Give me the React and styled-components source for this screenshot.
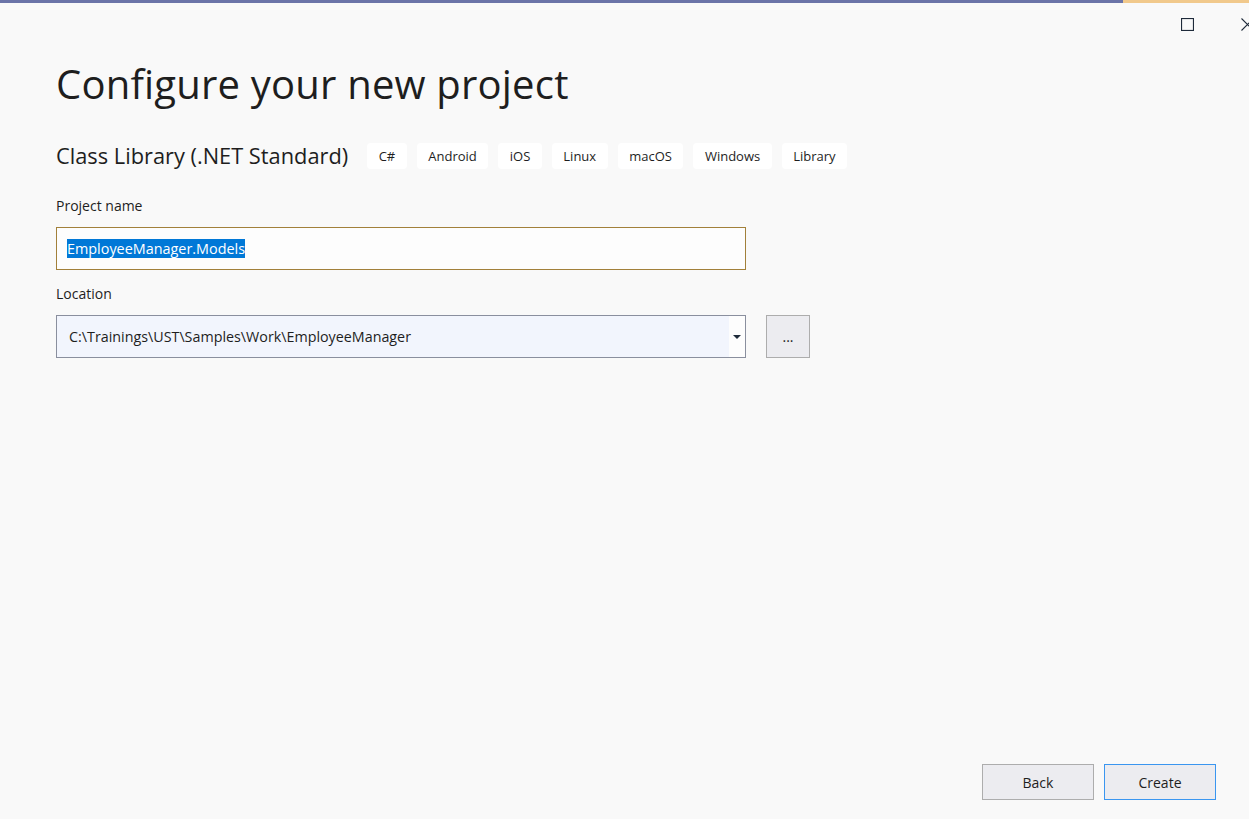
import styled, { createGlobalStyle } from 'styled-components';

const GlobalStyle = createGlobalStyle`
  html, body {
    margin: 0;
    padding: 0;
    background: #f9f9f9;
  }
  body {
    font-family: 'Open Sans', 'Noto Sans', sans-serif;
    color: #1e1e1e;
  }
`;

const Window = styled.div`
  width: 1249px;
  height: 819px;
  display: flex;
  flex-direction: column;
  overflow: hidden;
  background: #f9f9f9;
`;

const AccentBar = styled.div`
  display: flex;
  height: 3px;
  flex-shrink: 0;
`;

const AccentSegment = styled.div`
  height: 100%;
  background: ${(props) => props.color};
  ${(props) => (props.width ? `width: ${props.width}px;` : 'flex: 1;')}
`;

const TitleBar = styled.div`
  display: flex;
  justify-content: flex-end;
  gap: 47px;
  padding-top: 15px;
  margin-right: -5px;
  height: 12px;
`;

const WindowButton = styled.span`
  display: flex;
  width: 13px;
  height: 13px;
`;

const Content = styled.div`
  display: flex;
  flex-direction: column;
  padding: 0 56px;
  flex: 1;
`;

const Title = styled.h1`
  margin: 27px 0 0;
  font-size: 40px;
  font-weight: 400;
  line-height: 54px;
  letter-spacing: 0.2px;
`;

const TemplateRow = styled.div`
  display: flex;
  align-items: center;
  margin-top: 30px;
`;

const TemplateName = styled.h2`
  margin: 0 19px 0 0;
  font-size: 21.8px;
  font-weight: 400;
  line-height: 30px;
`;

const Tags = styled.div`
  display: flex;
  gap: 10px;
`;

const Tag = styled.span`
  display: flex;
  align-items: center;
  justify-content: center;
  height: 26px;
  padding: 0 11.5px;
  border-radius: 4px;
  background: #ffffff;
  font-size: 13px;
`;

const Field = styled.div`
  display: flex;
  flex-direction: column;
  margin-top: ${(props) => props.top}px;
`;

const Label = styled.label`
  font-size: 14px;
  line-height: 20px;
  margin-bottom: 11px;
`;

const TextBox = styled.div`
  box-sizing: border-box;
  width: 690px;
  height: 43px;
  display: flex;
  align-items: center;
  padding-left: 10px;
  border: 1px solid #a2803a;
  background: #fdfdfd;
  font-size: 14.4px;
`;

const Selected = styled.span`
  background: #0078d7;
  color: #ffffff;
  line-height: 19px;
`;

const PathRow = styled.div`
  display: flex;
  gap: 20px;
`;

const Combo = styled.div`
  box-sizing: border-box;
  width: 690px;
  height: 43px;
  display: flex;
  border: 1px solid #8a8f9e;
  background: #fdfdfd;
`;

const ComboText = styled.div`
  flex: 1;
  display: flex;
  align-items: center;
  padding-left: 12px;
  background: #f2f5fd;
  font-size: 14.3px;
`;

const ComboArrow = styled.div`
  width: 16px;
  display: flex;
  align-items: center;
  justify-content: center;
`;

const Button = styled.button`
  box-sizing: border-box;
  width: ${(props) => props.width}px;
  height: ${(props) => props.height}px;
  display: flex;
  align-items: center;
  justify-content: center;
  padding: 0;
  background: #ececf0;
  border: 1px solid ${(props) => (props.primary ? '#3a96f0' : '#adadad')};
  font-family: inherit;
  font-size: 14px;
  color: #1e1e1e;
`;

const Footer = styled.div`
  display: flex;
  justify-content: flex-end;
  gap: 10px;
  margin-top: auto;
  margin-right: -23px;
  margin-bottom: 19px;
`;

const tags = ['C#', 'Android', 'iOS', 'Linux', 'macOS', 'Windows', 'Library'];

export default function App() {
  return (
    <Window>
      <GlobalStyle />
      <AccentBar>
        <AccentSegment color="#6b74a8" />
        <AccentSegment color="#f1c98c" width={126} />
      </AccentBar>
      <TitleBar>
        <WindowButton>
          <svg width="13" height="13" viewBox="0 0 13 13">
            <rect x="0.5" y="0.5" width="12" height="12" fill="none" stroke="#1e2a3a" strokeWidth="1.2" />
          </svg>
        </WindowButton>
        <WindowButton>
          <svg width="13" height="13" viewBox="0 0 13 13">
            <path d="M0.5 0.5 L12.5 12.5 M12.5 0.5 L0.5 12.5" stroke="#1e2a3a" strokeWidth="1.1" />
          </svg>
        </WindowButton>
      </TitleBar>
      <Content>
        <Title>Configure your new project</Title>
        <TemplateRow>
          <TemplateName>Class Library (.NET Standard)</TemplateName>
          <Tags>
            {tags.map((t) => (
              <Tag key={t}>{t}</Tag>
            ))}
          </Tags>
        </TemplateRow>
        <Field top={25}>
          <Label>Project name</Label>
          <TextBox>
            <Selected>EmployeeManager.Models</Selected>
          </TextBox>
        </Field>
        <Field top={14}>
          <Label>Location</Label>
          <PathRow>
            <Combo>
              <ComboText>C:\Trainings\UST\Samples\Work\EmployeeManager</ComboText>
              <ComboArrow>
                <svg width="8" height="4" viewBox="0 0 8 4">
                  <path d="M0 0 L8 0 L4 4 Z" fill="#1e2a3a" />
                </svg>
              </ComboArrow>
            </Combo>
            <Button width={44} height={43}>...</Button>
          </PathRow>
        </Field>
        <Footer>
          <Button width={112} height={36}>Back</Button>
          <Button width={112} height={36} primary>Create</Button>
        </Footer>
      </Content>
    </Window>
  );
}
